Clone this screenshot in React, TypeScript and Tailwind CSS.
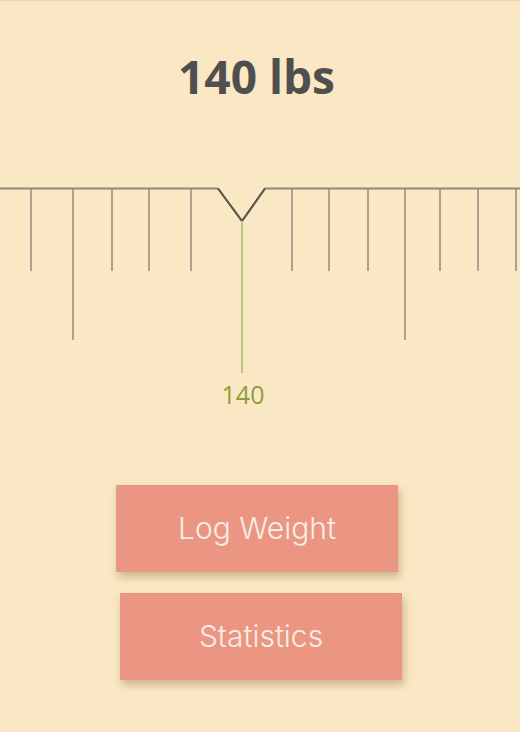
const shortTicks = [31, 112, 149, 191, 292, 329, 368, 440, 478, 516];
const longTicks = [73, 405];

function Ruler() {
  return (
    <svg width="520" height="200" viewBox="0 0 520 200" className="block">
      {/* baseline with the pointer notch */}
      <polyline
        points="0,8.5 218,8.5 242,41 265,8.5 520,8.5"
        fill="none"
        stroke="#8d887b"
        strokeWidth="2"
      />
      <polyline points="218,8.5 242,41 265,8.5" fill="none" stroke="#5a5650" strokeWidth="2" />
      {shortTicks.map((x) => (
        <line key={x} x1={x} y1={9} x2={x} y2={91} stroke="#8f8a80" strokeWidth="1.5" />
      ))}
      {longTicks.map((x) => (
        <line key={x} x1={x} y1={9} x2={x} y2={160} stroke="#8f8a80" strokeWidth="1.5" />
      ))}
      <line x1={242} y1={41} x2={242} y2={193} stroke="#bcc67c" strokeWidth="2" />
    </svg>
  );
}

export default function App() {
  return (
    <div className="w-[520px] h-[732px] bg-[#fae8c4] border-t border-[#f6d2b2] flex flex-col overflow-hidden">
      <h1
        className="mt-[47px] w-[513px] text-center text-[46px] leading-[56px] font-bold text-[#4f4f4f]"
        style={{ fontFamily: '"Open Sans", sans-serif' }}
      >
        140 lbs
      </h1>

      <div className="mt-[76px]">
        <Ruler />
      </div>

      <div
        className="mt-[2px] w-[486px] text-center text-[25px] leading-[24px] text-[#8d9e3e]"
        style={{ fontFamily: '"Open Sans", sans-serif' }}
      >
        140
      </div>

      <div className="mt-[79px] flex flex-col gap-[21px]" style={{ fontFamily: 'Inter, sans-serif' }}>
        <button className="ml-[116px] w-[282px] h-[87px] bg-[#eb9583] text-[#f8eee6] text-[30px] font-light shadow-[2px_5px_8px_rgba(120,90,40,0.35)]">
          Log Weight
        </button>
        <button className="ml-[120px] w-[282px] h-[87px] bg-[#eb9583] text-[#f8eee6] text-[30px] font-light shadow-[2px_5px_8px_rgba(120,90,40,0.35)]">
          Statistics
        </button>
      </div>
    </div>
  );
}
